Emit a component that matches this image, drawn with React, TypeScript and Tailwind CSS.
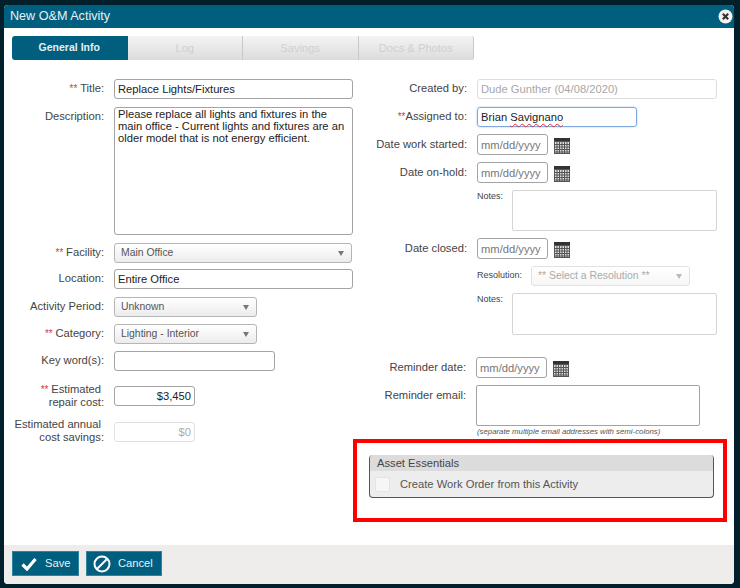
import React from "react";

const inputCls = "border border-[#a3a3a3] rounded-[3px] px-[3px] bg-white text-[11.2px] text-[#222] outline-none";

const Req = ({ text = "** " }: { text?: string }) => <span className="text-[#d9363e] text-[10px]">{text}</span>;

const Calendar = () => (
  <svg width="16" height="16" viewBox="0 0 16 16" className="shrink-0 ml-[6px] mt-[4px]">
    <rect x="0" y="0" width="16" height="4" fill="#333" />
    <rect x="0.5" y="3.5" width="15" height="12" fill="#ddd" stroke="#555" />
    <path d="M3 4v11M5.500 4v11M8 4v11M10.500 4v11M13 4v11M1 6.500h14M1 9h14M1 11.500h14M1 14h14" stroke="#555" strokeWidth="1" fill="none" />
  </svg>
);

const Select = ({ text, className, disabled }: { text: string; className: string; disabled?: boolean }) => (
  <div className={`h-[20px] rounded-[3px] border flex items-center justify-between pl-[6px] pr-[7px] text-[10.4px] bg-gradient-to-b shrink-0 ${disabled ? "border-[#e2e2e2] from-white to-[#f7f7f7] text-[#aaa]" : "border-[#b5b5b5] from-white to-[#ececec] text-[#555]"} ${className}`}>
    <span>{text}</span>
    <span className={`w-0 h-0 border-x-[3px] border-x-transparent border-t-[5px] ${disabled ? "border-t-[#bbb]" : "border-t-[#777]"}`} />
  </div>
);

const DateField = () => (
  <div className="flex ml-[10px]">
    <input readOnly placeholder="mm/dd/yyyy" className={`${inputCls} w-[71px] h-[21px] placeholder:text-[#777]`} />
    <Calendar />
  </div>
);

const Label = ({ children, className = "w-[100px] leading-[14px] pb-[2px]" }: { children: React.ReactNode; className?: string }) => (
  <label className={`text-right text-[11.2px] text-[#444] shrink-0 ${className}`}>{children}</label>
);

const Tab = ({ text, active, last }: { text: string; active?: boolean; last?: boolean }) => (
  <div className={`w-[115.5px] h-[24px] flex items-center justify-center border-r ${active ? "bg-[#005f7f] text-[#e6eef2] text-[10.5px] font-bold border-[#005f7f] rounded-l-[3px]" : "bg-gradient-to-b from-[#f4f4f4] to-[#dcdcdc] text-[#d0d0d0] text-[11.2px] border-[#c8c8c8]"} ${last ? "rounded-r-[3px]" : ""}`}>
    {text}
  </div>
);

const App = () => {
  return (
    <div className="w-[740px] h-[588px] bg-[#02202c] pl-[4px] pt-[5px] overflow-hidden" style={{ fontFamily: '"Liberation Sans", Arial, sans-serif' }}>
      <div className="w-[730px] h-[579px] flex flex-col rounded-[4px] overflow-hidden bg-white">
        <div className="h-[23px] bg-[#005f7f] flex items-center justify-between pl-[6px] pr-[1px] shrink-0">
          <span className="text-[12.6px] text-[#e8f0f3]">New O&amp;M Activity</span>
          <svg width="15" height="15" viewBox="0 0 14 14">
            <circle cx="7" cy="7" r="6.500" fill="#f2f2f2" />
            <path d="M4.500 4.500l5 5M9.500 4.500l-5 5" stroke="#333" strokeWidth="2" />
          </svg>
        </div>

        <div className="flex-1 flex flex-col">
          <div className="flex mt-[8px] ml-[8px]">
            <Tab text="General Info" active />
            <Tab text="Log" />
            <Tab text="Savings" />
            <Tab text="Docs & Photos" last />
          </div>

          <div className="flex mt-[19px]">
            {/* left column */}
            <div className="w-[349px] shrink-0 flex flex-col">
              <div className="flex items-center">
                <Label><Req />Title:</Label>
                <input readOnly value="Replace Lights/Fixtures" className={`${inputCls} ml-[10px] w-[240px] h-[20px]`} />
              </div>
              <div className="flex mt-[8px]">
                <Label className="w-[100px] leading-[14px] pt-[2px]">Description:</Label>
                <textarea
                  readOnly
                  value="Please replace all lights and fixtures in the main office - Current lights and fixtures are an older model that is not energy efficient."
                  className={`${inputCls} ml-[10px] w-[240px] h-[128px] leading-[12px] resize-none py-0`}
                />
              </div>
              <div className="flex items-center mt-[8px]">
                <Label><Req />Facility:</Label>
                <Select text="Main Office" className="ml-[10px] w-[238px]" />
              </div>
              <div className="flex items-center mt-[6px]">
                <Label>Location:</Label>
                <input readOnly value="Entire Office" className={`${inputCls} ml-[10px] w-[240px] h-[20px]`} />
              </div>
              <div className="flex items-center mt-[8px]">
                <Label>Activity Period:</Label>
                <Select text="Unknown" className="ml-[10px] w-[143px]" />
              </div>
              <div className="flex items-center mt-[7px]">
                <Label><Req />Category:</Label>
                <Select text="Lighting - Interior" className="ml-[10px] w-[143px]" />
              </div>
              <div className="flex items-center mt-[7px]">
                <Label>Key word(s):</Label>
                <input readOnly className={`${inputCls} ml-[10px] w-[161px] h-[20px]`} />
              </div>
              <div className="flex items-center h-[20px] mt-[15px]">
                <Label className="w-[100px] leading-[13px]"><span className="pr-[3px]"><Req />Estimated</span><br />repair cost:</Label>
                <input readOnly value="$3,450" className={`${inputCls} ml-[10px] w-[81px] h-[20px] text-right`} />
              </div>
              <div className="flex items-center h-[20px] mt-[16px]">
                <Label className="w-[100px] leading-[13px] -mt-[3px]"><span className="pr-[3px]">Estimated annual</span><br />cost savings:</Label>
                <input readOnly value="$0" className="ml-[10px] w-[81px] h-[20px] border border-[#e0e0e0] rounded-[3px] px-[3px] text-[11.2px] text-right text-[#aaa]" />
              </div>
            </div>

            {/* right column */}
            <div className="flex-1 flex flex-col">
              <div className="flex items-center">
                <Label className="w-[114px] leading-[14px] pb-[2px]">Created by:</Label>
                <input readOnly value="Dude Gunther (04/08/2020)" className="ml-[10px] w-[240px] h-[20px] border border-[#dedede] rounded-[3px] px-[3px] text-[11.2px] text-[#a8a8a8]" />
              </div>
              <div className="flex items-center mt-[8px]">
                <Label className="w-[114px] leading-[14px] pb-[2px]"><Req text="**" />Assigned to:</Label>
                <div className="ml-[10px] w-[160px] h-[20px] border border-[#7fa8e0] rounded-[3px] px-[3px] text-[11.2px] leading-[18px] text-[#222] shadow-[0_0_2px_#9dc0f0]">
                  Brian <span className="underline decoration-wavy decoration-[#e03030] decoration-1 underline-offset-[2px]">Savignano</span>
                </div>
              </div>
              <div className="flex items-center mt-[7px]">
                <Label className="w-[114px] leading-[14px] pb-[2px]">Date work started:</Label>
                <DateField />
              </div>
              <div className="flex items-center mt-[7px]">
                <Label className="w-[114px] leading-[14px] pb-[2px]">Date on-hold:</Label>
                <DateField />
              </div>
              <div className="flex mt-[7px] ml-[124px]">
                <span className="w-[35px] text-[9px] text-[#444] shrink-0">Notes:</span>
                <textarea readOnly className="w-[205px] h-[41px] border border-[#d5d5d5] rounded-[2px] resize-none" />
              </div>
              <div className="flex items-center mt-[7px]">
                <Label className="w-[114px] leading-[14px] pb-[2px]">Date closed:</Label>
                <DateField />
              </div>
              <div className="flex items-center mt-[7px] ml-[124px]">
                <span className="w-[54px] text-[9px] text-[#444] shrink-0">Resolution:</span>
                <Select disabled text="** Select a Resolution **" className="w-[159px]" />
              </div>
              <div className="flex mt-[7px] ml-[124px]">
                <span className="w-[35px] text-[9px] text-[#444] shrink-0">Notes:</span>
                <textarea readOnly className="w-[205px] h-[42px] border border-[#d5d5d5] rounded-[2px] resize-none" />
              </div>
              <div className="flex items-center mt-[22px]">
                <Label className="w-[113px] leading-[14px] pb-[2px]">Reminder date:</Label>
                <DateField />
              </div>
              <div className="flex mt-[7px]">
                <Label className="w-[113px] leading-[14px] pt-[3px]">Reminder email:</Label>
                <textarea readOnly className="ml-[10px] w-[224px] h-[41px] border border-[#a3a3a3] rounded-[2px] resize-none" />
              </div>
              <div className="ml-[124px] text-[7.8px] leading-[9px] italic text-[#555] mt-[1px]">(separate multiple email addresses with semi-colons)</div>

              <div className="mt-[3px] w-[374px] h-[83px] border-[4px] border-[#fe0000] pt-[12px] pl-[12px]">
                <div className="w-[345px] h-[43px] rounded-[4px] border-x border-b border-[#555] bg-[#ededed] overflow-hidden">
                  <div className="h-[16px] bg-[#dcdcdc] pl-[7px] text-[11.2px] leading-[16px] text-[#444]">Asset Essentials</div>
                  <div className="flex items-center pl-[5px] mt-[5px]">
                    <span className="w-[15px] h-[15px] rounded-[2px] border border-[#e4e4e4] bg-[#f6f6f6]" />
                    <span className="ml-[10px] text-[11.2px] text-[#555]">Create Work Order from this Activity</span>
                  </div>
                </div>
              </div>
            </div>
          </div>
        </div>

        <div className="h-[39px] bg-[#eeedec] flex items-start gap-[7px] pl-[8px] pt-[6px] shrink-0">
          <button className="w-[67px] h-[25px] bg-[#005f7f] border border-[#2f84a0] flex items-center pl-[8px] gap-[8px] text-[11.2px] text-[#e8f0f3]">
            <svg width="16" height="14" viewBox="0 0 16 14">
              <path d="M1.500 7.500l4.500 4.500 8.500-10" stroke="#fff" strokeWidth="3.200" fill="none" />
            </svg>
            Save
          </button>
          <button className="w-[76px] h-[25px] bg-[#005f7f] border border-[#2f84a0] flex items-center pl-[6px] gap-[7px] text-[11.2px] text-[#e8f0f3]">
            <svg width="18" height="18" viewBox="0 0 18 18">
              <circle cx="9" cy="9" r="7.500" stroke="#fff" strokeWidth="2" fill="none" />
              <path d="M4 14L14 4" stroke="#fff" strokeWidth="2" />
            </svg>
            Cancel
          </button>
        </div>
      </div>
    </div>
  );
};

export default App;
